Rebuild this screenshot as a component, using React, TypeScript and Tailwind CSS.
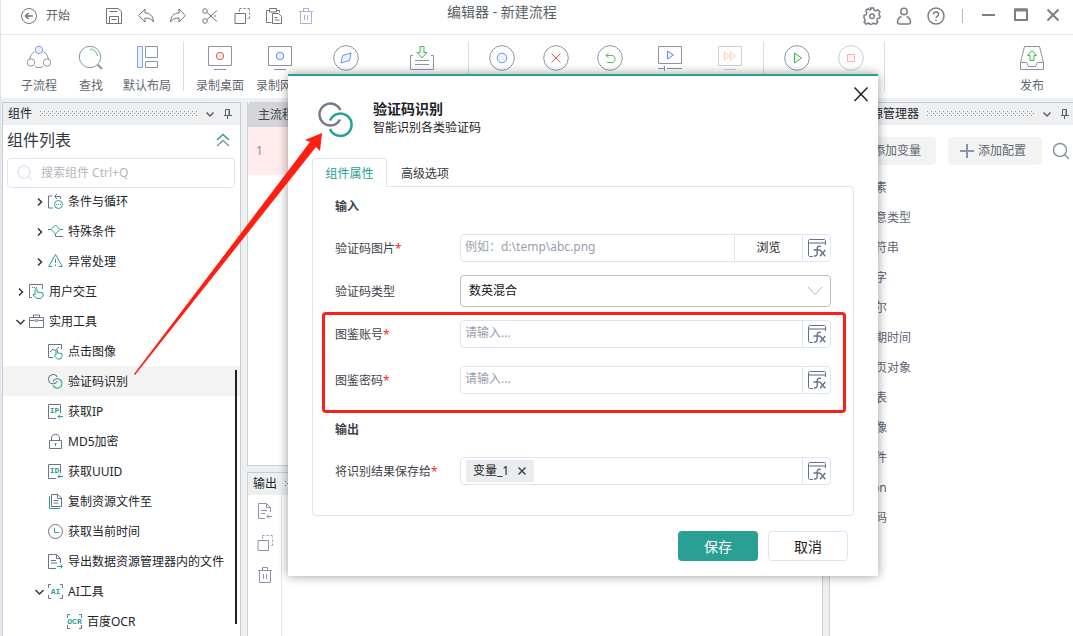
import type { ReactNode } from "react";

type IconProps = {
  size?: number;
  color?: string;
  width?: number;
  className?: string;
  children?: ReactNode;
};

const GRAY = "#8b93a5";
const TEAL = "#2aa094";
const SLATE = "#69768a";

function Icon({ size = 16, color = SLATE, width = 1, className = "", children }: IconProps) {
  return (
    <svg
      viewBox={`0 0 ${size} ${size}`}
      width={size}
      height={size}
      fill="none"
      stroke={color}
      strokeWidth={width}
      className={`shrink-0 ${className}`}
      aria-hidden="true"
    >
      {children}
    </svg>
  );
}

function Glyph({ x, y, size, children }: { x: number; y: number; size: number; children: string }) {
  return (
    <text x={x} y={y} fontSize={size} fill={TEAL} stroke="none" fontWeight="700" textAnchor="middle" fontFamily="Liberation Mono, monospace">
      {children}
    </text>
  );
}

function RingsIcon({ size, className = "" }: { size: number; className?: string }) {
  return (
    <svg viewBox="0 0 36 36" width={size} height={size} fill="none" strokeWidth="2.5" className={className} aria-hidden="true">
      <path d="M22.500 8A11 11 0 1 0 12 23.500c4.500 0 8-2 10-6" stroke="#727a8d" />
      <path d="M12 18.500A11.200 11.200 0 1 1 12 27" stroke={TEAL} />
    </svg>
  );
}

const copyShape = (
  <>
    <path d="M1 5.500h10.500v10H1z" />
    <path d="M5.500 3.500V.500h2m2 0h2m2 0h2v2m0 2v2m0 2v2h-2" strokeDasharray="2 1" />
  </>
);

const trashShape = <path d="M1 3.500h14M5.500 3.500V.500h5v3M2.500 3.500v12h11v-12M6.500 7v5M9.500 7v5" />;

const quickActions = [
  {
    label: "保存文件",
    color: "#6f747b",
    icon: <path d="M.500 .500h11.500l3.500 3v12h-15zM3.500 15.500v-7h9v7M3.500 3.500h8M5.500 11.500h5" />,
  },
  { label: "撤销", color: "#6f747b", icon: <path d="M7 1v4c5 0 8 3 8.500 9-2-3-4-4-8.500-4v4L.700 7.500z" /> },
  { label: "重做", color: "#6f747b", icon: <path d="M9 1v4C4 5 1 8 .500 14c2-3 4-4 8.500-4v4l6.300-6.500z" /> },
  {
    label: "剪切",
    color: "#6f747b",
    icon: (
      <>
        <circle cx="3" cy="3" r="2.300" />
        <circle cx="3" cy="13" r="2.300" />
        <path d="M5 4.500l10 9M5 11.500l10-9" />
        <path d="M8 8h8" strokeDasharray="2 2" />
      </>
    ),
  },
  { label: "复制", color: "#6f747b", icon: copyShape },
  {
    label: "粘贴",
    color: "#6f747b",
    icon: (
      <path d="M5.500 14.500h-5v-12h3m7 0h3v2M3.500 .500h7v3.500h-7zM6.500 5.500h6l3 3v7h-9zM8.500 9.500h3M8.500 12h5" />
    ),
  },
  { label: "删除", color: "#a9b3cb", icon: trashShape },
];

const ring = <circle cx="13" cy="13" r="12.300" />;
const monitor = <path d="M1.500 1.500h23v19h-23zM7 24.500h12" />;

type Tool = { name: string; label?: string; width: string; icon: ReactNode; faded?: boolean };

const toolGroups: Tool[][] = [
  [
    {
      name: "子流程",
      label: "子流程",
      width: "w-[52px]",
      icon: (
        <>
          <path d="M8.500 6.500C5 9 3.500 12 3.500 16M17.500 6.500c3.500 2.500 5 5.500 5 9.500M9 21.500c2.500 1.500 5.500 1.500 8 0" />
          <circle cx="13" cy="5" r="3.700" stroke="#7f9cef" fill="#edf2ff" />
          <circle cx="5" cy="17.500" r="3.700" fill="#fff" />
          <circle cx="21" cy="17.500" r="3.700" fill="#fff" />
        </>
      ),
    },
    {
      name: "查找",
      label: "查找",
      width: "w-[52px]",
      icon: (
        <>
          <circle cx="12" cy="12" r="10.700" />
          <path d="M19.500 19.500l4.500 4.500" strokeWidth="2" />
          <path d="M12 4c4 .300 7 3 7.500 7" stroke="#57b96a" />
        </>
      ),
    },
    {
      name: "默认布局",
      label: "默认布局",
      width: "w-[60px]",
      icon: (
        <>
          <path d="M3.500 1.500h5v21h-5z" stroke="#7f9cef" fill="#edf2ff" />
          <path d="M11.500 1.500h12v11h-12zM11.500 16.500h12v6h-12z" />
        </>
      ),
    },
  ],
  [
    {
      name: "录制桌面",
      label: "录制桌面",
      width: "w-[60px]",
      icon: (
        <>
          {monitor}
          <circle cx="13" cy="11" r="3.700" stroke="#e45a5a" fill="#fdeeee" />
        </>
      ),
    },
    {
      name: "录制网页",
      label: "录制网页",
      width: "w-[60px]",
      icon: (
        <>
          {monitor}
          <circle cx="13" cy="11" r="3.700" stroke="#5f8bf0" fill="#edf2ff" />
        </>
      ),
    },
    {
      name: "浏览器",
      width: "w-[72px]",
      icon: (
        <>
          {ring}
          <path d="M8 18l1.500-7.500L18 8l-1.500 7.500z" stroke="#6f93ee" fill="#edf2ff" />
        </>
      ),
    },
    {
      name: "下载",
      width: "w-[80px]",
      icon: (
        <>
          <path d="M4 10.500H1.500v14h23v-14H22M6 15.500h14M6 19.500h14" />
          <path d="M11 1.500h4v6h3L13 13 8 7.500h3z" stroke="#57b35f" fill="#eef9ee" />
        </>
      ),
    },
  ],
  [
    {
      name: "断点",
      width: "w-[54px]",
      icon: (
        <>
          {ring}
          <circle cx="13" cy="13" r="4.800" stroke="#6f93ee" fill="#edf2ff" />
        </>
      ),
    },
    {
      name: "清除断点",
      width: "w-[54px]",
      icon: (
        <>
          {ring}
          <path d="M8.500 8.500l9 9m0-9l-9 9" stroke="#e45a5a" />
        </>
      ),
    },
    {
      name: "返回",
      width: "w-[54px]",
      icon: (
        <>
          {ring}
          <path d="M11.500 8l-2.500 2.500 2.500 2.500M9 10.500H15c4 0 4 7 0 7h-5" stroke="#57b96a" />
        </>
      ),
    },
    {
      name: "单步执行",
      width: "w-[66px]",
      icon: (
        <>
          <path d="M1.500 1.500h23v17h-23zM1 23.500h7M10 23.500h15M7.500 21v5" />
          <path d="M10.500 6v8l6-4z" stroke="#5f8bf0" fill="#edf2ff" />
        </>
      ),
    },
    {
      name: "继续执行",
      width: "w-[54px]",
      faded: true,
      icon: (
        <>
          {monitor}
          <path d="M7.500 7v8l5-4zM13.500 7v8l5-4z" stroke="#f0a04a" fill="#fff4e8" />
        </>
      ),
    },
  ],
  [
    {
      name: "运行",
      width: "w-[54px]",
      icon: (
        <>
          {ring}
          <path d="M10.500 8v10l7-5z" stroke="#3fb24b" fill="#eef9ee" />
        </>
      ),
    },
    {
      name: "停止",
      width: "w-[54px]",
      faded: true,
      icon: (
        <>
          {ring}
          <path d="M9.500 9.500h7v7h-7z" stroke="#e45a5a" fill="#ffe9e9" />
        </>
      ),
    },
  ],
];

type TreeItem = { label: string; level: 1 | 2 | 3; toggle?: "open" | "closed"; active?: boolean; icon: ReactNode };

const tree: TreeItem[] = [
  {
    label: "条件与循环",
    level: 2,
    toggle: "closed",
    icon: (
      <>
        <path d="M4 2H.500v12H5M7 2.500h5.500V5M9 0L6.500 2.500 9 5" />
        <circle cx="10.500" cy="10.500" r="4" stroke={TEAL} />
        <path d="M8 10.500h5" stroke={TEAL} strokeDasharray="1 1" />
      </>
    ),
  },
  {
    label: "特殊条件",
    level: 2,
    toggle: "closed",
    icon: (
      <>
        <path d="M0 5.500h3l4.500-4.500 4.500 4.500h3M3 5.500L7.500 10 12 5.500" stroke={TEAL} />
        <path d="M7.500 10v2.500H15" />
      </>
    ),
  },
  {
    label: "异常处理",
    level: 2,
    toggle: "closed",
    icon: (
      <>
        <path d="M4 12.500H.700L5.500 4M11 12.500h3.300L9.500 4" stroke={TEAL} />
        <path d="M5 4.500l2.500-4 2.500 4M7.500 5v4M7.500 10.500V12" stroke={TEAL} />
      </>
    ),
  },
  {
    label: "用户交互",
    level: 1,
    toggle: "closed",
    icon: (
      <>
        <path d="M3 13.500H.500V.500h13V5" />
        <path d="M3 3.500h6" strokeDasharray="1 1" />
        <path d="M6 11V5.500c0-1.300 2-1.300 2 0V8l6 1v3l-2 2.500H8L4 11c0-1.300 1-1.500 2 0z" stroke={TEAL} />
      </>
    ),
  },
  {
    label: "实用工具",
    level: 1,
    toggle: "open",
    icon: (
      <>
        <path d="M.500 3.500h14v10H.500zM4.500 3.500V1h6v2.500M.500 6.500H5M10 6.500h4.500" />
        <path d="M5.500 6h4l-2 2z" />
      </>
    ),
  },
  {
    label: "点击图像",
    level: 2,
    icon: (
      <>
        <path d="M5 13.500H.500V.500h13V5M2 8l3-3 2 1.500L11 3" />
        <path d="M8 11V6.500c0-1 1.500-1 1.500 0V9l4.500.500v3L12.500 15h-3L6.500 12c0-1 .500-1.500 1.500-1z" stroke={TEAL} />
      </>
    ),
  },
  { label: "验证码识别", level: 2, active: true, icon: <RingsIcon size={15} /> },
  {
    label: "获取IP",
    level: 2,
    icon: (
      <>
        <path d="M8 14.500H.500V.500h12V9" />
        <path d="M15 12.500h-5m2-2l-2 2 2 2" stroke={TEAL} />
        <Glyph x={6.5} y={9} size={8}>IP</Glyph>
      </>
    ),
  },
  {
    label: "MD5加密",
    level: 2,
    icon: (
      <>
        <path d="M1.500 6.500h12v8h-12zM3.500 6.500V4c0-4.800 8-4.800 8 0v2.500" />
        <path d="M7.500 9v3M6.500 9.500h2" stroke={TEAL} />
      </>
    ),
  },
  {
    label: "获取UUID",
    level: 2,
    icon: (
      <>
        <path d="M8 14.500H.500V.500h12V9" />
        <path d="M15 12.500h-5m2-2l-2 2 2 2" stroke={TEAL} />
        <Glyph x={6.5} y={9} size={8}>ID</Glyph>
      </>
    ),
  },
  {
    label: "复制资源文件至",
    level: 2,
    icon: (
      <>
        <path d="M3.500 .500h6.500l3.500 3.500v8.500h-10zM9.500 1v3.500H13M5.500 6.500h5M5.500 9h5" />
        <path d="M1.500 2v12.500H12" stroke={TEAL} />
      </>
    ),
  },
  {
    label: "获取当前时间",
    level: 2,
    icon: (
      <>
        <circle cx="7.500" cy="7.500" r="7" />
        <path d="M6.500 4v4.500H11" stroke={TEAL} />
      </>
    ),
  },
  {
    label: "导出数据资源管理器内的文件",
    level: 2,
    icon: (
      <>
        <path d="M8 14.500H.500V.500h8l4 4V9M8.500 1v3.500H12M3 6.500h5M3 9h6" />
        <path d="M9 12.500h5.500m-2-2l2 2-2 2" stroke={TEAL} />
      </>
    ),
  },
  {
    label: "AI工具",
    level: 2,
    toggle: "open",
    icon: (
      <>
        <path d="M3 .500H.500V4M12 .500h2.500V4M3 14.500H.500V11M12 14.500h2.500V11" />
        <Glyph x={7.5} y={10} size={8}>AI</Glyph>
      </>
    ),
  },
  {
    label: "百度OCR",
    level: 3,
    icon: (
      <>
        <path d="M3 .500H.500V4M12 .500h2.500V4M3 14.500H.500V11M12 14.500h2.500V11" />
        <Glyph x={7.5} y={10} size={8}>OCR</Glyph>
      </>
    ),
  },
];

const indents = { 1: "pl-3", 2: "pl-[31px]", 3: "pl-[50px]" };

const variableTypes = ["元素", "任意类型", "字符串", "数字", "布尔", "日期时间", "网页对象", "列表", "图像", "文件", "Json", "密码"];

function Dots() {
  return (
    <svg className="h-[6px] min-w-0 flex-1" aria-hidden="true">
      <defs>
        <pattern id="grip" width="4" height="4" patternUnits="userSpaceOnUse">
          <rect width="1" height="1" fill="#8f959d" />
          <rect x="2" y="2" width="1" height="1" fill="#8f959d" />
        </pattern>
      </defs>
      <rect width="100%" height="6" fill="url(#grip)" />
    </svg>
  );
}

function PanelTitle({ title, className = "" }: { title: string; className?: string }) {
  return (
    <div className={`flex h-[23px] shrink-0 items-center border-t border-[#c8cbd0] bg-[#eeeff1] pr-[7px] pl-[5px] ${className}`}>
      <h2 className="mr-2 text-[12px] leading-4 whitespace-nowrap text-[#22252a]">{title}</h2>
      <Dots />
      <button type="button" aria-label="折叠" className="ml-2">
        <Icon size={10} color="#5b6068" width={1.5}>
          <path d="M1.500 3.500L5 7l3.500-3.500" />
        </Icon>
      </button>
      <button type="button" aria-label="固定" className="ml-2">
        <Icon size={10} color="#5b6068">
          <path d="M2.500 6.500v-6h4v6M6 .500v6M1 6.500h8M4.500 6.500V10" />
        </Icon>
      </button>
    </div>
  );
}

function TopBar() {
  return (
    <header className="flex h-[35px] shrink-0 items-center border-b border-[#e8e9eb] pr-3 pb-0.5 pl-5 text-[#5a5f66]">
      <button type="button" className="flex items-center gap-[9px] text-[12px]">
        <Icon color="#6f747b">
          <circle cx="8" cy="8" r="7.500" />
          <path d="M12 8H4.500M7.500 5l-3 3 3 3" strokeWidth="1.500" />
        </Icon>
        开始
      </button>
      <div className="ml-[36px] flex gap-4">
        {quickActions.map((a) => (
          <button key={a.label} type="button" aria-label={a.label}>
            <Icon color={a.color}>{a.icon}</Icon>
          </button>
        ))}
      </div>
      <h1 className="ml-[133px] pb-2 text-[14px] leading-5 whitespace-nowrap">编辑器 - 新建流程</h1>
      <div className="ml-auto flex items-center gap-[14px]">
        <button type="button" aria-label="设置">
          <Icon size={18} color="#7b8088" width={1.5}>
            <path d="M7.500 1h3l.600 2.200 1.700.700 2-1.100 2.100 2.100-1.100 2 .700 1.600L17 9v1.500l-.500.500-2.100.600-.600 1.500 1.100 2-2.100 2.100-2-1.100-1.500.600-.800 1.300h-1l-.800-1.300-1.500-.600-2 1.100-2.100-2.100 1.100-2-.700-1.500L1 10.500V8.300l2.200-.700.600-1.700-1.100-2 2.100-2.100 2 1.100 1.200-.500z" />
            <circle cx="9" cy="9.200" r="2.300" />
          </Icon>
        </button>
        <button type="button" aria-label="用户">
          <Icon size={18} color="#7b8088" width={1.5}>
            <circle cx="9" cy="4.500" r="3.200" />
            <path d="M6.500 9.500C3.500 10.500 2.500 12 2.500 15c0 1.500.500 2 2 2h9c1.500 0 2-.500 2-2 0-3-1-4.500-4-5.500" />
          </Icon>
        </button>
        <button type="button" aria-label="帮助">
          <Icon size={18} color="#7b8088" width={1.5}>
            <circle cx="9" cy="9" r="8" />
            <path d="M6.500 7.500c0-3.300 5-3.300 5 0 0 1.800-2.500 1.800-2.500 3.500M9 12.500V14" />
          </Icon>
        </button>
        <span className="mr-1 ml-[3px] h-[14px] w-px bg-[#b5b8bd]" />
        <div className="flex gap-4 pb-1">
          <button type="button" aria-label="最小化">
            <Icon color="#7b8088" width={2}>
              <path d="M1 9h13" />
            </Icon>
          </button>
          <button type="button" aria-label="最大化">
            <Icon color="#7b8088" width={2}>
              <path d="M2 3.500h12M2 3v11h12V3" />
              <path d="M1 4h14" strokeWidth="3" />
            </Icon>
          </button>
          <button type="button" aria-label="关闭">
            <Icon color="#7b8088" width={2}>
              <path d="M2.500 3.500l11 11m0-11l-11 11" />
            </Icon>
          </button>
        </div>
      </div>
    </header>
  );
}

function Divider() {
  return <span className="mx-[6px] mt-[6px] h-[50px] w-px shrink-0 bg-[#dcdee2]" />;
}

function Ribbon() {
  return (
    <nav className="flex h-[63px] shrink-0 px-3 text-[#626771]">
      {toolGroups.map((group, i) => (
        <div key={i} className="flex">
          {group.map((tool) => (
            <button
              key={tool.name}
              type="button"
              aria-label={tool.name}
              className={`flex shrink-0 flex-col items-center gap-[7px] pt-[10px] text-[12px] leading-4 whitespace-nowrap ${tool.width}`}
            >
              <Icon size={26} color={GRAY} className={tool.faded ? "opacity-45" : ""}>
                {tool.icon}
              </Icon>
              {tool.label}
            </button>
          ))}
          <Divider />
        </div>
      ))}
      <button type="button" className="ml-auto flex w-[58px] flex-col items-center gap-[7px] pt-[10px] text-[12px] leading-4">
        <Icon size={26} color={GRAY}>
          <path d="M5.500 1.500h15l4 16v7h-23v-7zM1.500 17.500h6l2 4h7l2-4h6" />
          <path d="M11 15.500v-5H8.500L13 5.500l4.500 5H15v5z" stroke="#4fb358" fill="#eef9ee" />
        </Icon>
        发布
      </button>
    </nav>
  );
}

function ComponentPanel() {
  return (
    <aside className="relative flex flex-col overflow-hidden border-x border-[#c8cbd0] bg-white">
      <PanelTitle title="组件" />
      <div className="mb-1 flex h-[29px] shrink-0 items-center justify-between pr-[10px] pl-1">
        <h3 className="text-[16px] leading-6 text-[#33373d]">组件列表</h3>
        <button type="button" aria-label="全部折叠">
          <Icon size={14} color={GRAY} width={1.5}>
            <path d="M1 7l6-5.500L13 7" stroke={TEAL} />
            <path d="M1 13l6-5.500 6 5.500" />
          </Icon>
        </button>
      </div>
      <label className="mr-[5px] ml-1 flex h-[30px] shrink-0 items-center gap-2 rounded-sm border border-[#dce5f3] pl-[9px]">
        <Icon color="#dfe7f5" width={1.5}>
          <circle cx="7" cy="7" r="6" />
          <path d="M11.500 11.500L15 15" />
        </Icon>
        <input
          type="search"
          aria-label="搜索组件"
          placeholder="搜索组件 Ctrl+Q"
          className="min-w-0 flex-1 text-[12px] outline-none placeholder:text-[#b4b7bd]"
        />
      </label>
      <ul className="-mt-0.5">
        {tree.map((item) => (
          <li key={item.label}>
            <button
              type="button"
              className={`flex h-[30px] w-full items-center pt-px text-[12px] whitespace-nowrap text-[#22252a] ${indents[item.level]} ${item.active ? "bg-[#f3f3f3]" : ""}`}
            >
              <span className="w-[14px] shrink-0">
                {item.toggle ? (
                  <Icon size={10} color="#33373d" width={1.5}>
                    <path d={item.toggle === "open" ? "M1.500 3l4 4 4-4" : "M4 1.500L7.500 5 4 8.500"} />
                  </Icon>
                ) : null}
              </span>
              <Icon size={15} className="mr-[5px] overflow-visible">{item.icon}</Icon>
              {item.label}
            </button>
          </li>
        ))}
      </ul>
      <span className="absolute right-[3px] bottom-3 h-[254px] w-0.5 bg-[#222]" />
    </aside>
  );
}

function Workspace() {
  return (
    <main className="flex min-w-0 flex-col gap-[6px]">
      <section className="flex-1 border-x border-b border-[#cdd0d4] bg-white">
        <div className="flex h-[25px] items-center rounded-tl-sm bg-[#d3d5d8] pl-[10px] text-[12px] text-[#44484f]">主流程</div>
        <div className="flex h-12 items-center bg-[#ffeced] pl-2 text-[12px] text-[#8a8d93]">1</div>
      </section>
      <section className="flex h-[164px] flex-col border-x border-[#cdd0d4] bg-white">
        <PanelTitle title="输出" />
        <div className="flex w-[34px] flex-1 flex-col items-center gap-4 border-r border-[#dfe6f5] pt-2">
          <button type="button" aria-label="导出">
            <Icon color={GRAY}>
              <path d="M8 15.500H1.500V.500h8l4 4V9M9.500 .500v4h4M4 7.500h6M4 10.500h4M15 13.500h-5m2-2l-2 2 2 2" />
            </Icon>
          </button>
          <button type="button" aria-label="复制输出">
            <Icon color={GRAY}>{copyShape}</Icon>
          </button>
          <button type="button" aria-label="清空输出">
            <Icon color={GRAY}>{trashShape}</Icon>
          </button>
        </div>
      </section>
    </main>
  );
}

function ResourcePanel() {
  return (
    <aside className="flex min-w-0 flex-col overflow-hidden border-l border-[#cdd0d4] bg-white text-[#626771]">
      <PanelTitle title="数据资源管理器" className="-mr-1" />
      <div className="mt-3 flex h-7 items-center gap-3 pl-3">
        <button type="button" className="h-7 w-[94px] shrink-0 rounded-sm bg-[#f3f3f3] pl-4 text-[12px]">添加变量</button>
        <button type="button" className="flex h-7 w-[94px] shrink-0 items-center gap-1 rounded-sm bg-[#f3f3f3] pl-3 text-[12px]">
          <Icon size={14} color={GRAY} width={2}>
            <path d="M7 0v14M0 7h14" />
          </Icon>
          添加配置
        </button>
        <button type="button" aria-label="搜索变量" className="-ml-0.5">
          <Icon size={18} color={GRAY} width={1.5}>
            <circle cx="8" cy="8" r="6.500" />
            <path d="M12.500 12.500l4.500 4.500" />
          </Icon>
        </button>
      </div>
      <ul className="mt-2 pl-[33px] text-[12px] leading-[30px]">
        {variableTypes.map((t) => (
          <li key={t}>{t}</li>
        ))}
      </ul>
    </aside>
  );
}

function FxButton() {
  return (
    <button type="button" aria-label="表达式" className="flex w-7 shrink-0 items-center justify-center border-l border-[#dce5f3]">
      <Icon size={18} color="#66708f">
        <path d="M17.500 6V2c0-1-.500-1.500-1.500-1.500H2C1 .500.500 1 .500 2v14c0 1 .500 1.500 1.500 1.500h3" />
        <path d="M1 4h16" strokeWidth="2" stroke="#aab1c6" />
        <path d="M12.800 7.500c-2.500-.700-3.600.200-3.600 2.300v4.400c0 2.200-1 3.100-3.200 2.600M5.500 11h6.300M12 11l5.300 6.300M17.300 11L12 17.300" strokeWidth="1.400" />
      </Icon>
    </button>
  );
}

function Field({ id, label, required, className = "", children }: { id: string; label: string; required?: boolean; className?: string; children: ReactNode }) {
  return (
    <div className={`flex items-center ${className}`}>
      <label htmlFor={id} className="w-[125px] shrink-0 pt-0.5 text-[12px] leading-4">
        {label}
        {required ? <span className="text-[#ff1f1f]">*</span> : null}
      </label>
      {children}
    </div>
  );
}

const boxStyle = "flex h-7 min-w-0 flex-1 rounded-sm border border-[#dce5f3] bg-white";
const inputStyle = "min-w-0 flex-1 px-1 pb-0.5 text-[12px] outline-none placeholder:text-[#98a0b0]";

function Dialog() {
  return (
    <div
      role="dialog"
      aria-labelledby="dialog-title"
      className="absolute top-[74px] left-[287px] w-[590px] border-t-2 border-[#2aa094] bg-white text-[#3f434b] shadow-[0_0_10px_rgba(0,0,0,0.4)]"
    >
      <div className="flex h-[82px] gap-[19px] pr-[9px] pl-[30px]">
        <RingsIcon size={36} className="mt-[26px] shrink-0" />
        <div className="flex-1 pt-6 text-[#1e2125]">
          <h2 id="dialog-title" className="text-[14px] leading-[18px] font-bold">验证码识别</h2>
          <p className="text-[12px] leading-5">智能识别各类验证码</p>
        </div>
        <button type="button" aria-label="关闭对话框" className="mt-[11px] self-start">
          <Icon color="#222" width={1.5}>
            <path d="M1.500 .500l13 13.500m0-13.500l-13 13.500" />
          </Icon>
        </button>
      </div>

      <div role="tablist" className="mx-6 flex h-[29px] text-[12px]">
        <button type="button" role="tab" aria-selected="true" className="z-10 w-[75px] rounded-t-sm border border-b-0 border-[#dce5f3] bg-white pt-px text-[#2aa094]">
          组件属性
        </button>
        <button type="button" role="tab" aria-selected="false" className="w-[76px] pt-0.5 text-[#33373d]">
          高级选项
        </button>
      </div>

      <div className="mx-6 -mt-px rounded-sm rounded-tl-none border border-[#dce5f3] px-[22px] pt-[10px] pb-[30px]">
        <h3 className="text-[12px] leading-5 font-bold">输入</h3>
        <Field id="image" label="验证码图片" required className="mt-[17px]">
          <div className={boxStyle}>
            <input id="image" type="text" placeholder="例如：d:\temp\abc.png" className={inputStyle} />
            <button type="button" className="w-[68px] border-l border-[#dce5f3] text-[12px] text-[#222]">浏览</button>
            <FxButton />
          </div>
        </Field>
        <Field id="kind" label="验证码类型" className="mt-[13px]">
          <div className="relative min-w-0 flex-1">
            <select id="kind" className="h-8 w-full appearance-none rounded-sm border border-[#bcbec2] bg-white px-2 text-[12px] text-[#111]">
              <option>数英混合</option>
            </select>
            <Icon color="#b5b8bd" className="pointer-events-none absolute top-2 right-2">
              <path d="M1 4l7 7.500L15 4" />
            </Icon>
          </div>
        </Field>
        <div className="relative mt-[13px]">
          <Field id="account" label="图鉴账号" required>
            <div className={boxStyle}>
              <input id="account" type="text" placeholder="请输入..." className={inputStyle} />
              <FxButton />
            </div>
          </Field>
          <Field id="password" label="图鉴密码" required className="mt-[18px]">
            <div className={boxStyle}>
              <input id="password" type="text" placeholder="请输入..." className={inputStyle} />
              <FxButton />
            </div>
          </Field>
          <div className="pointer-events-none absolute -top-2 -right-[15px] -bottom-[19px] -left-[13px] rounded-sm border-3 border-[#ff1f12]" />
        </div>
        <h3 className="mt-[26px] text-[12px] leading-5 font-bold">输出</h3>
        <Field id="result" label="将识别结果保存给" required className="mt-[17px]">
          <div className={boxStyle}>
            <div className="flex min-w-0 flex-1 items-center pl-[5px]">
              <span className="flex h-[22px] items-center gap-2 rounded-xs bg-[#ebecef] px-[7px] text-[12px] text-[#222]">
                变量_1
                <button type="button" aria-label="移除变量_1">
                  <Icon size={10} color="#44484f" width={1.5}>
                    <path d="M1.500 1.500l7 7m0-7l-7 7" />
                  </Icon>
                </button>
              </span>
              <input id="result" type="text" className="min-w-0 flex-1 px-1 text-[12px] outline-none" />
            </div>
            <FxButton />
          </div>
        </Field>
      </div>

      <div className="flex justify-end gap-[10px] px-[30px] py-[15px] text-[14px]">
        <button type="button" className="h-[30px] w-20 rounded-sm bg-[#2aa094] text-white">保存</button>
        <button type="button" className="h-[30px] w-20 rounded-sm border border-[#dce5f3] text-[#222]">取消</button>
      </div>
    </div>
  );
}

export default function App() {
  return (
    <div className="relative flex h-screen min-w-[1000px] flex-col overflow-hidden border-l border-[#dbe4ef] bg-white font-['Noto_Sans','Noto_Sans_CJK_SC',sans-serif]">
      <TopBar />
      <Ribbon />
      <div className="grid min-h-0 flex-1 grid-cols-[239px_minmax(0,1fr)_244px] gap-[6px] bg-[#eeeff1] pt-1 pl-px">
        <ComponentPanel />
        <Workspace />
        <ResourcePanel />
      </div>
      <Dialog />
      {/* pointer from the tree entry to the dialog it opens */}
      <svg className="pointer-events-none absolute top-[132px] left-[132px] h-[244px] w-[190px]" viewBox="133 132 190 244" fill="#ff1f12" aria-hidden="true">
        <path d="M134 374L310 142l-5-2 17-7-2 18-4-4L135 375z" />
      </svg>
    </div>
  );
}
